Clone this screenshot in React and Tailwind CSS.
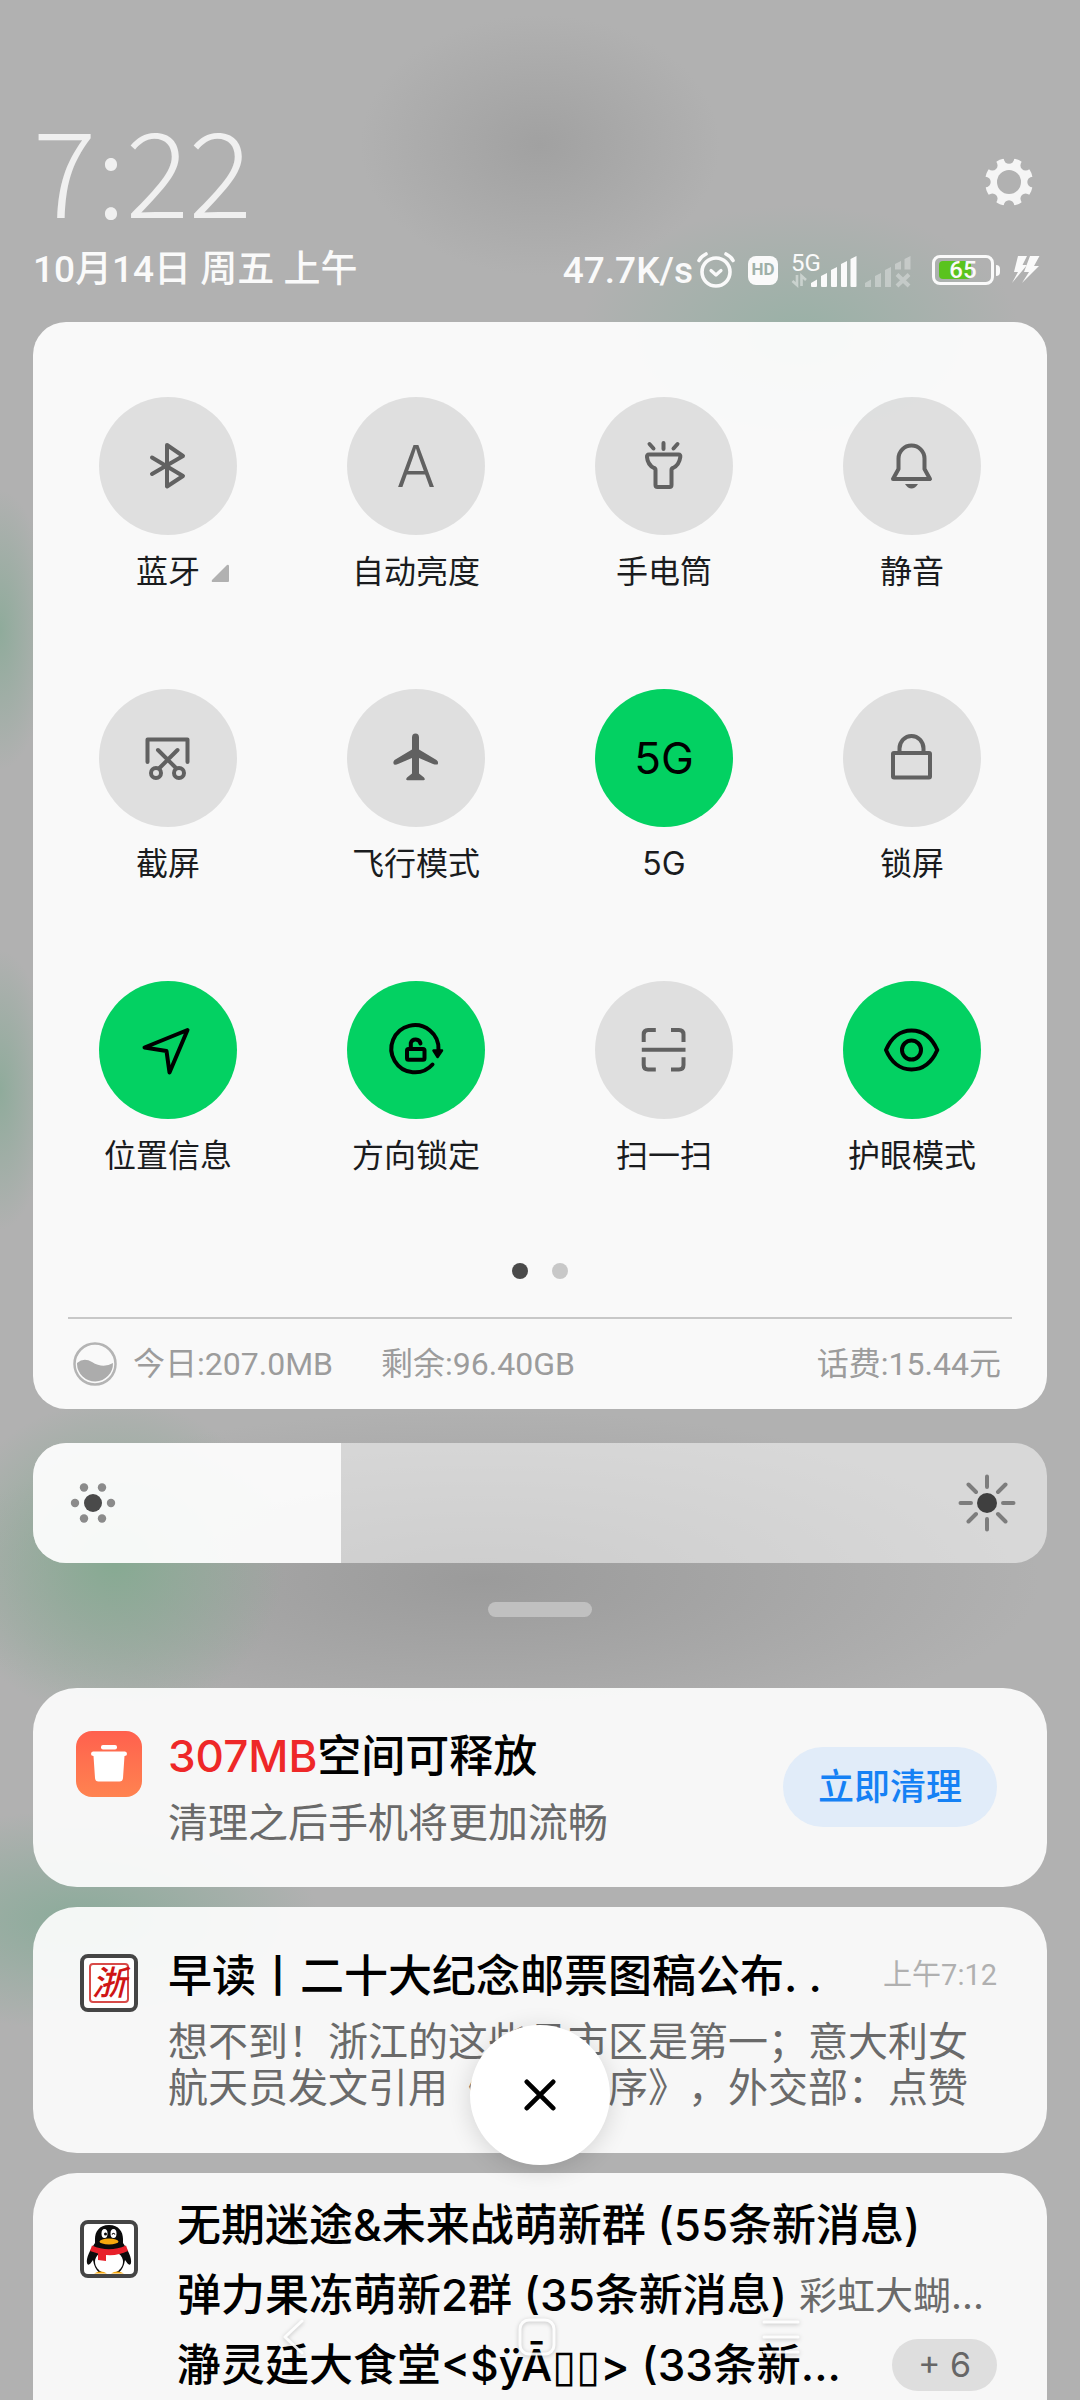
import { useState } from "react";

const line = {
  fill: "none",
  stroke: "currentColor",
  strokeWidth: 4,
  strokeLinecap: "round",
  strokeLinejoin: "round",
};

function TileIcon({ name }) {
  const icons = {
    bluetooth: <path {...line} d="M53 60.5 L84 79 L68 89.5 V48 L84 59 L53 77" />,
    torch: (
      <g {...line}>
        <path d="M54.5 47 L58.5 51.5 M68.5 46 V52 M82.5 47 L78.5 51.5" />
        <path d="M54 57.5 H83.5 Q85.7 57.5 85.3 60 C84.5 66 82 69 78 71 Q76.5 71.5 76.5 73 V88 Q76.5 90 74.5 90 H62.5 Q60.5 90 60.5 88 V73 Q60.5 71.5 59 71 C55 69 52.5 66 52 60 Q51.7 57.5 54 57.5 Z" />
      </g>
    ),
    bell: (
      <g {...line}>
        <path d="M55.5 72 V61.5 A13 13 0 0 1 81.5 61.5 V72 L87 82 H50 Z" />
        <path d="M62 87 H75 Q72 91.5 68.5 91.5 T62 87 Z" fill="currentColor" stroke="none" />
      </g>
    ),
    scissors: (
      <g {...line}>
        <path d="M48.5 73 V50.5 H88.5 V73 M59 61 L77 79 M78.5 61 L60.5 79" />
        <circle cx="57" cy="84" r="5" />
        <circle cx="80" cy="84" r="5" />
      </g>
    ),
    plane: (
      <path
        fill="currentColor"
        d="M65 48.5 Q65 44.5 68.5 44.5 T72 48.5 V60.5 L89.5 71 Q92 73 90.5 75.5 Q88 75.8 86 75 L72 69 V84.5 L77 88.5 Q78.8 91 76.5 91.3 H60.5 Q58.2 91 60 88.5 L65 84.5 V69 L51 75 Q49 76 47 75.5 Q45.5 73 47.5 71 L65 60.5 Z"
      />
    ),
    lock: (
      <g {...line}>
        <rect x="50" y="64" width="37" height="24.5" rx="1" />
        <path d="M56.5 64 V59.5 A12 12.5 0 0 1 80.5 59.5 V64" />
      </g>
    ),
    location: <path {...line} d="M88.5 49 L45.5 66.5 L67.5 70 L70.5 91.5 Z" />,
    rotation: (
      <g {...line}>
        <path d="M85.5 83.5 A23.6 23.6 0 1 1 91.5 69" />
        <path d="M86.5 69.5 H95 L90.6 76 Z" fill="currentColor" strokeWidth="2.5" />
        <rect x="60" y="68" width="17.5" height="10.8" rx="1.5" />
        <path d="M63.8 68 V62 A5 5 0 0 1 73.5 62.5" />
      </g>
    ),
    scan: (
      <g {...line} strokeLinecap="butt">
        <path d="M60.8 49 H53 Q48.7 49 48.7 53.5 V61 M76 49 H84 Q88.5 49 88.5 53.5 V61 M60.8 88.5 H53 Q48.7 88.5 48.7 84 V76.3 M76 88.5 H84 Q88.5 88.5 88.5 84 V76.3 M46.8 68.7 H90.5" />
      </g>
    ),
    eye: (
      <g {...line}>
        <path d="M43 69 C48 57 57 49.5 68.5 49.5 S89 57 94.3 69 C89 81 80 88.5 68.5 88.5 S48 81 43 69 Z" />
        <circle cx="68.5" cy="69" r="9.5" />
      </g>
    ),
  };
  return (
    <svg viewBox="0 0 138 138" className="size-[138px]" aria-hidden="true">
      {icons[name]}
    </svg>
  );
}

const TILES = [
  { label: "蓝牙", icon: "bluetooth", expandable: true },
  { label: "自动亮度", text: "A", textClass: "text-[58px] font-light" },
  { label: "手电筒", icon: "torch" },
  { label: "静音", icon: "bell" },
  { label: "截屏", icon: "scissors" },
  { label: "飞行模式", icon: "plane" },
  { label: "5G", text: "5G", textClass: "text-[44px]", on: true },
  { label: "锁屏", icon: "lock" },
  { label: "位置信息", icon: "location", on: true },
  { label: "方向锁定", icon: "rotation", on: true },
  { label: "扫一扫", icon: "scan" },
  { label: "护眼模式", icon: "eye", on: true },
];

function Tile({ tile }) {
  const [on, setOn] = useState(Boolean(tile.on));
  return (
    <button
      type="button"
      aria-pressed={on}
      onClick={() => setOn(!on)}
      className="flex flex-col items-center gap-3 font-['Inter','Noto_Sans_CJK_SC',sans-serif]"
    >
      <span
        className={
          on
            ? "flex size-[138px] items-center justify-center rounded-full bg-[#03d162] text-black"
            : "flex size-[138px] items-center justify-center rounded-full bg-black/10 text-[#616161]"
        }
      >
        {tile.icon ? (
          <TileIcon name={tile.icon} />
        ) : (
          <span className={tile.textClass} aria-hidden="true">
            {tile.text}
          </span>
        )}
      </span>
      <span className="relative text-[32px] leading-[50px] text-[#1a1c1e]">
        {tile.label}
        {tile.expandable && (
          <svg viewBox="0 0 20 20" className="absolute top-4 left-full ml-2.5 size-5 text-[#b1b1b1]" aria-hidden="true">
            <path d="M17 2 L2 17 Q1 19 3 19 H18 Q19 19 19 18 V3 Q18.6 1 17 2 Z" fill="currentColor" />
          </svg>
        )}
      </span>
    </button>
  );
}

function Gear() {
  const teeth = [22.5, 67.5, 112.5, 157.5, 202.5, 247.5, 292.5, 337.5];
  const notches = [0, 45, 90, 135, 180, 225, 270, 315];
  return (
    <svg viewBox="0 0 48 48" className="size-12" aria-hidden="true">
      <mask id="gear-mask">
        <g fill="white">
          <circle cx="24" cy="24" r="20" />
          {teeth.map((a) => (
            <path key={a} d="M16 6 L20.4 0.3 Q24 -0.4 27.6 0.3 L32 6 V14 H16 Z" transform={`rotate(${a} 24 24)`} />
          ))}
        </g>
        <g fill="black">
          <circle cx="24" cy="24" r="12" />
          {notches.map((a) => (
            <circle key={a} cx="24" cy="0.5" r="5.2" transform={`rotate(${a} 24 24)`} />
          ))}
        </g>
      </mask>
      <rect width="48" height="48" fill="#f5f5f5" mask="url(#gear-mask)" />
    </svg>
  );
}

function StatusBar() {
  return (
    <div className="flex items-center text-[#fafafa]">
      <span className="text-[37px] leading-none font-medium">47.7K/s</span>
      <svg viewBox="0 0 38 38" className="ml-1 size-[38px]" fill="none" stroke="currentColor" strokeLinecap="round" strokeLinejoin="round" aria-hidden="true">
        <circle cx="19" cy="21" r="14" strokeWidth="3.6" />
        <path d="M2 9.5 Q4 5.5 9 3 M36 9.5 Q34 5.5 29 3" strokeWidth="3.6" />
        <path d="M14 19.5 L19 24 L24 19.5" strokeWidth="3.2" />
      </svg>
      <span className="ml-[13px] flex h-[29px] w-[30px] items-center justify-center rounded-lg bg-[#fafafa] text-[17px] font-bold text-[#9fb0a9]">
        HD
      </span>
      <div className="ml-[13px] flex h-[38px] items-end">
        <div className="flex h-9 w-5 flex-col">
          <span className="text-[24px] leading-5">5G</span>
          <svg viewBox="0 0 20 16" className="h-4 w-5 opacity-45" fill="none" stroke="currentColor" strokeWidth="2.6" aria-hidden="true">
            <path d="M6 2 V12 L1.5 8 M10.5 13 V3 L15 7" />
          </svg>
        </div>
        <svg viewBox="0 0 46 36" className="h-9 w-[46px]" fill="currentColor" aria-hidden="true">
          <path d="M0 33 V30 L6 26.500 V33 Q6 34 5 34 H1 Q0 34 0 33 Z" />
          <path d="M10 33 V23 L16 20 V33 Q16 34 15 34 H11 Q10 34 10 33 Z" />
          <path d="M20 33 V17 L26 14 V33 Q26 34 25 34 H21 Q20 34 20 33 Z" />
          <path d="M30 33 V11 L36 8 V33 Q36 34 35 34 H31 Q30 34 30 33 Z" />
          <path d="M39.500 33 V6 L45.500 3 V33 Q45.500 34 44.500 34 H40.500 Q39.500 34 39.500 33 Z" />
        </svg>
        <svg viewBox="0 0 48 36" className="ml-2 h-9 w-12 opacity-35" fill="currentColor" aria-hidden="true">
          <path d="M0 34 V30 L6 26.500 V34 Z M10 34 V23 L16 20 V34 Z M20 34 V17 L26 14 V34 Z" />
          <path d="M30 16.500 V11 L36 8 V16.500 Z M39.500 16.500 V6 L45.500 3 V16.500 Z" />
          <path d="M32 21.500 L44 33 M44 21.500 L32 33" stroke="currentColor" strokeWidth="4" />
        </svg>
      </div>
      <div className="ml-[19px] flex items-center gap-[2px]">
        <div className="relative flex h-[30px] w-[62px] items-center justify-center rounded-lg border-3 border-[#fafafa]">
          <span className="absolute top-[3px] bottom-[3px] left-1 w-8 rounded-sm bg-[#5ac31e]" />
          <span className="relative text-[24px] leading-none font-medium">65</span>
        </div>
        <span className="h-[11px] w-1 rounded-r-sm bg-[#fafafa]" />
      </div>
      <svg viewBox="0 0 28 30" className="ml-3 h-[30px] w-7" fill="currentColor" aria-hidden="true">
        <path d="M6 1 H15 L10.500 10 H15 L0 28 L6 17 H2 Z" />
        <path d="M18 1 H27.500 L22 11 H27 L10 28 L17 17 H12 Z" />
      </svg>
    </div>
  );
}

function Brightness() {
  const [level, setLevel] = useState(30);
  return (
    <div className="relative mt-[34px] flex h-[120px] items-center justify-between overflow-hidden rounded-[33px] bg-white/50 px-[31px]">
      <span className="absolute inset-y-0 left-0 bg-white/85" style={{ width: `${level + 0.4}%` }} />
      <svg viewBox="0 0 58 58" className="relative size-[58px]" aria-hidden="true">
        <g fill="#8b8b8b">
          <circle cx="11" cy="29" r="4.200" />
          <circle cx="47" cy="29" r="4.200" />
          <circle cx="20" cy="13.500" r="4.200" />
          <circle cx="38" cy="13.500" r="4.200" />
          <circle cx="20" cy="44.500" r="4.200" />
          <circle cx="38" cy="44.500" r="4.200" />
        </g>
        <circle cx="29" cy="29" r="9" fill="#4a4a4a" />
      </svg>
      <svg viewBox="0 0 58 58" className="relative size-[58px]" aria-hidden="true">
        <path
          d="M29 2.500 V13 M29 45 V55.500 M2.500 29 H13 M45 29 H55.500 M10.500 10.500 L18 18 M40 40 L47.500 47.500 M47.500 10.500 L40 18 M18 40 L10.500 47.500"
          stroke="#7d7d7d"
          strokeWidth="4"
          strokeLinecap="round"
        />
        <circle cx="29" cy="29" r="10" fill="#3f3f3f" />
      </svg>
      <input
        type="range"
        aria-label="亮度"
        min="0"
        max="100"
        value={level}
        onChange={(e) => setLevel(Number(e.target.value))}
        className="absolute inset-0 h-full w-full cursor-pointer opacity-0"
      />
    </div>
  );
}

function Penguin() {
  return (
    <svg viewBox="0 0 58 58" className="mt-[30px] size-[58px] shrink-0" aria-hidden="true">
      <rect x="2" y="2" width="54" height="54" rx="6" fill="#fff" stroke="#454545" strokeWidth="4" />
      <path d="M29 5 C19 5 15 12 15 19 V23 C10 30 6 38 7 43 C8 47 11 43 13 40 C14 46 16 50 19 52.500 H39 C42 50 44 46 45 40 C47 43 50 47 51 43 C52 38 48 30 43 23 V19 C43 12 39 5 29 5 Z" fill="#0b0b0b" />
      <ellipse cx="29" cy="42" rx="14" ry="11.500" fill="#fff" />
      <ellipse cx="24.500" cy="13.500" rx="3" ry="4.500" fill="#fff" />
      <ellipse cx="33.500" cy="13.500" rx="3" ry="4.500" fill="#fff" />
      <circle cx="25.500" cy="14" r="1.500" fill="#0b0b0b" />
      <path d="M32 14.500 Q33.500 12 35 14.500" stroke="#0b0b0b" strokeWidth="1.200" fill="none" />
      <ellipse cx="29" cy="21.500" rx="9.500" ry="3" fill="#f7a80d" />
      <path d="M12 25.500 Q29 33 46 25.500 L48 31 Q38 36 26 35 V41 L18 40 V33.500 L10 31 Z" fill="#e8202a" />
      <path d="M14 53.500 Q21 49.500 27 53.500 Z M31 53.500 Q37 49.500 44 53.500 Z" fill="#f7a80d" />
    </svg>
  );
}

const CARD = "rounded-[44px] bg-white/90";

export default function App() {
  return (
    <div className="relative h-screen overflow-hidden bg-[#b1b1b1] bg-[radial-gradient(ellipse_180px_130px_at_540px_145px,#a1a1a1,transparent),radial-gradient(ellipse_220px_130px_at_800px_335px,#99b1a6,transparent),radial-gradient(ellipse_50px_140px_at_0px_630px,#8fab9b,transparent),radial-gradient(ellipse_50px_140px_at_0px_1090px,#8fab9b,transparent),radial-gradient(ellipse_170px_160px_at_115px_1560px,#86aa92,transparent),radial-gradient(ellipse_560px_170px_at_480px_1580px,#9b9b9b,transparent),radial-gradient(ellipse_240px_110px_at_80px_1920px,#8bab9a,transparent)] px-[33px] font-['Roboto','Noto_Sans_CJK_SC',sans-serif] [text-spacing-trim:space-all]">
      <header className="pt-28">
        <div className="flex h-32 items-start justify-between">
          <time className="font-['Noto_Sans_CJK_SC',sans-serif] text-[118px] leading-[110px] font-light text-[#f0f0f0]">
            7:22
          </time>
          <button type="button" aria-label="设置" className="mt-[46px] mr-[14px]">
            <Gear />
          </button>
        </div>
        <div className="mt-1 flex h-[52px] items-center justify-between pr-[7px]">
          <span className="text-[37px] font-medium text-[#fafafa]">10月14日 周五 上午</span>
          <StatusBar />
        </div>
      </header>

      <main>
        <section className="mt-[26px] rounded-[33px] bg-white/92 pt-[75px]">
          <div className="grid grid-cols-4 gap-y-[92px] px-[11px]">
            {TILES.map((tile) => (
              <Tile key={tile.label} tile={tile} />
            ))}
          </div>
          <div className="mt-[82px] flex justify-center gap-6">
            <span className="size-4 rounded-full bg-[#4a4a4a]" />
            <span className="size-4 rounded-full bg-[#c8c8c8]" />
          </div>
          <div className="mx-[35px] mt-[38px] flex h-[92px] items-center border-t-2 border-[#c8c8c8] pr-[11px] pl-[5px] text-[32px] text-[#9c9c9c]">
            <svg viewBox="0 0 44 44" className="size-11" aria-hidden="true">
              <circle cx="22" cy="22" r="20.500" fill="none" stroke="#b4b4b4" strokeWidth="2.500" />
              <path d="M4 21 Q11 15 19 20 Q30 27 40 21 A18 18 0 0 1 4 22 Z" fill="#acacac" />
            </svg>
            <span className="ml-4">今日:207.0MB</span>
            <span className="ml-12">剩余:96.40GB</span>
            <span className="ml-auto">话费:15.44元</span>
          </div>
        </section>

        <Brightness />

        <div className="mx-auto mt-[39px] h-[15px] w-[104px] rounded-full bg-[#c0c0c0]" />

        <section className="mt-[71px] flex flex-col gap-5 font-['Inter','Noto_Sans_CJK_SC',sans-serif]">
          <article className={`${CARD} flex pt-9 pr-[50px] pb-[29px] pl-[43px]`}>
            <span className="mt-[7px] flex size-[66px] shrink-0 items-center justify-center rounded-2xl bg-gradient-to-b from-[#ff604e] to-[#ff8350]">
              <svg viewBox="0 0 66 66" className="size-[66px]" fill="#fff" aria-hidden="true">
                <rect x="25" y="14" width="16" height="4.500" rx="2" />
                <path d="M17 20.500 H49 Q51 20.500 51 23 Q51 25 48.500 25 L47 47 Q46.700 50.500 43.500 50.500 H22.500 Q19.300 50.500 19 47 L17.500 25 Q15 25 15 23 Q15 20.500 17 20.500 Z" />
              </svg>
            </span>
            <div className="ml-[26px] flex-1">
              <h2 className="text-[44px] leading-[64px] font-medium text-black">
                <span className="text-[#ee2828]">307MB</span>空间可释放
              </h2>
              <p className="text-[40px] leading-[70px] text-[#6a6a6a]">清理之后手机将更加流畅</p>
            </div>
            <button type="button" className="mt-[23px] h-20 w-[214px] rounded-full bg-[#e1ecf9] text-[36px] font-medium text-[#1581f5]">
              立即清理
            </button>
          </article>

          <article className={`${CARD} flex pt-[37px] pr-[50px] pb-[42px] pl-[47px]`}>
            <span className="mt-[10px] flex size-[58px] shrink-0 items-center justify-center rounded-lg border-4 border-[#454545] bg-white">
              <span className="flex size-10 items-center justify-center rounded-sm border-2 border-[#d84a48] text-[34px] leading-none font-medium text-[#cf1515] italic">
                浙
              </span>
            </span>
            <div className="ml-[30px] flex-1">
              <div className="flex items-center justify-between">
                <h2 className="text-[44px] leading-[64px] font-medium text-black">早读丨二十大纪念邮票图稿公布. .</h2>
                <time className="font-['Roboto','Noto_Sans_CJK_SC',sans-serif] text-[29px] text-[#b0b0b0]">上午7:12</time>
              </div>
              <p className="mt-[11px] text-[40px] leading-[46px] text-[#6a6a6a]">
                想不到！浙江的这些县市区是第一；意大利女航天员发文引用《兰亭集序》，外交部：点赞
              </p>
            </div>
          </article>

          <article className={`${CARD} flex pt-[17px] pr-[50px] pb-20 pl-[47px]`}>
            <Penguin />
            <div className="ml-[39px] min-w-0 flex-1 text-[44px] leading-[70px] font-medium text-black">
              <p className="truncate">无期迷途&amp;未来战萌新群 (55条新消息)</p>
              <p className="flex items-center gap-3 whitespace-nowrap">
                弹力果冻萌新2群 (35条新消息)
                <span className="text-[38px] font-normal text-[#6a6a6a]">彩虹大蝴...</span>
              </p>
              <p className="flex items-center justify-between whitespace-nowrap">
                <span>瀞灵廷大食堂&lt;$ÿĀ▯▯&gt; (33条新...</span>
                <span className="flex h-[52px] w-[105px] items-center justify-center rounded-full bg-[#dedede] text-[34px] font-normal text-[#666666]">
                  + 6
                </span>
              </p>
            </div>
          </article>
        </section>
      </main>

      <nav className="absolute inset-x-0 bottom-11 flex justify-center gap-[206px] pr-1.5 text-white/90">
        <button type="button" aria-label="返回" className="size-[38px] drop-shadow-[0_1px_2px_rgba(0,0,0,0.25)]">
          <svg viewBox="0 0 38 38" className="size-full" {...line} strokeWidth="3">
            <path d="M28 3 L11 19 L28 35" />
          </svg>
        </button>
        <button type="button" aria-label="主屏幕" className="size-[38px] drop-shadow-[0_1px_2px_rgba(0,0,0,0.25)]">
          <svg viewBox="0 0 38 38" className="size-full" {...line} strokeWidth="3">
            <rect x="2" y="2" width="34" height="34" rx="9" />
          </svg>
        </button>
        <button type="button" aria-label="最近任务" className="size-[38px] drop-shadow-[0_1px_2px_rgba(0,0,0,0.25)]">
          <svg viewBox="0 0 38 38" className="size-full" {...line} strokeWidth="3">
            <path d="M2 4 H36 M2 19 H36 M2 34 H36" />
          </svg>
        </button>
      </nav>

      <button
        type="button"
        aria-label="清除全部通知"
        className="absolute bottom-[235px] left-1/2 flex size-[140px] -translate-x-1/2 items-center justify-center rounded-full bg-white text-black shadow-[0_4px_24px_rgba(0,0,0,0.14)]"
      >
        <svg viewBox="0 0 34 34" className="size-8" {...line} strokeWidth="5">
          <path d="M3 3 L31 31 M31 3 L3 31" />
        </svg>
      </button>
    </div>
  );
}
